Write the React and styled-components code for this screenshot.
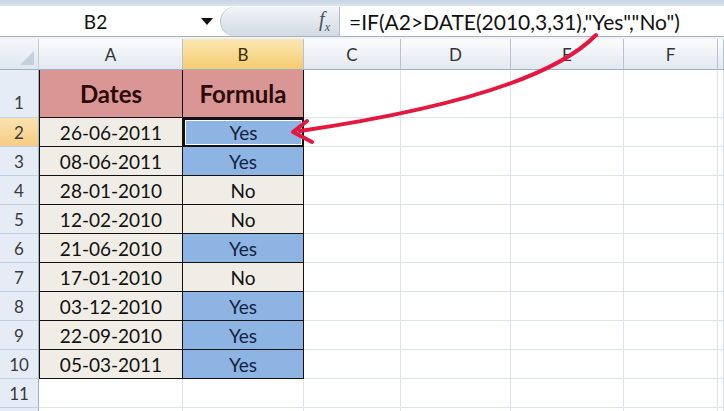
import React from "react";
import styled, { createGlobalStyle } from "styled-components";

const GlobalStyle = createGlobalStyle`
  html, body {
    margin: 0;
    padding: 0;
    background: #fff;
  }
  body {
    font-family: Lato, "Liberation Sans", sans-serif;
    overflow: hidden;
  }
`;

const rows = [
  ["26-06-2011", "Yes"],
  ["08-06-2011", "Yes"],
  ["28-01-2010", "No"],
  ["12-02-2010", "No"],
  ["21-06-2010", "Yes"],
  ["17-01-2010", "No"],
  ["03-12-2010", "Yes"],
  ["22-09-2010", "Yes"],
  ["05-03-2011", "Yes"],
];

const columns = ["A", "B", "C", "D", "E", "F", ""];

const App = () => {
  return (
    <Frame>
      <GlobalStyle />
      <TopBand />
      <FormulaBar>
        <NameBox>
          <NameText>B2</NameText>
          <DropArrow />
        </NameBox>
        <FxButton>
          <FxText>
            f<sub>x</sub>
          </FxText>
        </FxButton>
        <FormulaText>=IF(A2&gt;DATE(2010,3,31),"Yes","No")</FormulaText>
      </FormulaBar>
      <BarGap />
      <Sheet>
        <Corner>
          <CornerTriangle />
        </Corner>
        {columns.map((c) => (
          <ColHeader key={c || "g"} $active={c === "B"}>
            {c}
          </ColHeader>
        ))}

        <RowHeader $tall>1</RowHeader>
        <Cell $kind="head" $table $left>
          Dates
        </Cell>
        <Cell $kind="head" $table>
          Formula
        </Cell>
        {[0, 1, 2, 3, 4].map((i) => (
          <Cell key={i} />
        ))}

        {rows.map(([date, result], i) => (
          <React.Fragment key={date}>
            <RowHeader $active={i === 0}>{i + 2}</RowHeader>
            <Cell $kind="date" $table $left>
              {date}
            </Cell>
            <Cell $kind={result === "Yes" ? "yes" : "no"} $table $selected={i === 0}>
              {result}
            </Cell>
            {[0, 1, 2, 3, 4].map((k) => (
              <Cell key={k} />
            ))}
          </React.Fragment>
        ))}

        {["11", ""].map((n) => (
          <React.Fragment key={n || "last"}>
            <RowHeader>{n}</RowHeader>
            {[0, 1, 2, 3, 4, 5, 6].map((k) => (
              <Cell key={k} />
            ))}
          </React.Fragment>
        ))}
      </Sheet>

      <ArrowLayer viewBox="0 0 724 411" width="724" height="411">
        <path
          d="M 596 35 C 560 72, 470 106, 300 131"
          fill="none"
          stroke="#E5173F"
          strokeWidth="4"
          strokeLinecap="round"
        />
        <path
          d="M 307 121 L 293 132 L 312 142"
          fill="none"
          stroke="#E5173F"
          strokeWidth="4"
          strokeLinecap="round"
          strokeLinejoin="round"
        />
      </ArrowLayer>
    </Frame>
  );
};

export default App;

const Frame = styled.div`
  position: relative;
  width: 724px;
  height: 411px;
  overflow: hidden;
  background: #fff;
`;

const TopBand = styled.div`
  height: 6px;
  background: linear-gradient(#c6d4e6, #dbe4ef);
`;

const FormulaBar = styled.div`
  display: flex;
  align-items: stretch;
  height: 30px;
  background: #fff;
  border-bottom: 1px solid #a9b3c0;
`;

const NameBox = styled.div`
  width: 220px;
  display: flex;
  align-items: center;
`;

const NameText = styled.span`
  flex: 1;
  text-align: center;
  padding-right: 10px;
  font-size: 19px;
  color: #111;
`;

const DropArrow = styled.span`
  width: 0;
  height: 0;
  margin-right: 7px;
  border-left: 6px solid transparent;
  border-right: 6px solid transparent;
  border-top: 7px solid #111;
`;

const FxButton = styled.div`
  width: 120px;
  margin-top: 1px;
  border-radius: 16px 0 0 16px;
  background: linear-gradient(#f1f4f8, #d3dae4);
  border-left: 1px solid #b8c1cc;
  border-right: 1px solid #b5bcc6;
  display: flex;
  align-items: center;
  justify-content: flex-end;
  padding-right: 9px;
  box-sizing: border-box;
`;

const FxText = styled.span`
  font-family: "Liberation Serif", serif;
  font-style: italic;
  font-size: 20px;
  color: #4a525e;
  sub {
    font-size: 12px;
  }
`;

const FormulaText = styled.div`
  padding-left: 9px;
  display: flex;
  align-items: center;
  font-size: 21px;
  color: #111;
  white-space: nowrap;
`;

const BarGap = styled.div`
  height: 2px;
  background: #eef1f5;
`;

const Sheet = styled.div`
  display: grid;
  grid-template-columns: 39px 144px 121px 97px 110px 113px 94px 1fr;
  grid-template-rows: 31px 48px repeat(11, 29px);
`;

const Corner = styled.div`
  position: relative;
  background: linear-gradient(#f4f7fb, #dfe6ef);
  border-right: 1px solid #c5cdd8;
  border-bottom: 1px solid #9eb0c6;
  box-sizing: border-box;
`;

const CornerTriangle = styled.div`
  position: absolute;
  right: 4px;
  bottom: 4px;
  width: 0;
  height: 0;
  border-left: 14px solid transparent;
  border-bottom: 14px solid #c3cfdd;
`;

const ColHeader = styled.div`
  display: flex;
  align-items: center;
  justify-content: center;
  font-size: 17px;
  color: ${(p) => (p.$active ? "#3a2a00" : "#333")};
  background: ${(p) =>
    p.$active
      ? "linear-gradient(#fbe7b5, #f5cc6e)"
      : "linear-gradient(#fbfcfd, #e2e8f0)"};
  border-right: 1px solid #b8c2cf;
  border-bottom: 1px solid #9eb0c6;
  box-sizing: border-box;
`;

const RowHeader = styled.div`
  display: flex;
  align-items: ${(p) => (p.$tall ? "flex-end" : "center")};
  justify-content: center;
  padding-bottom: ${(p) => (p.$tall ? "4px" : "0")};
  font-size: 17px;
  color: #3a3a3a;
  background: ${(p) =>
    p.$active ? "linear-gradient(#fbe2b0, #f6cd84)" : "#e6ecf5"};
  border-right: 1px solid #9eb0c6;
  border-bottom: 1px solid #c5d0de;
  box-sizing: border-box;
`;

const cellBg = {
  head: "#d99694",
  date: "#efede6",
  yes: "#8db4e2",
  no: "#efede6",
};

const Cell = styled.div`
  position: relative;
  display: flex;
  align-items: center;
  justify-content: center;
  box-sizing: border-box;
  background: ${(p) => (p.$kind ? cellBg[p.$kind] : "#fff")};
  border-right: 1px solid ${(p) => (p.$table ? "#111" : "#dde3ea")};
  border-bottom: 1px solid ${(p) => (p.$table ? "#111" : "#dde3ea")};
  border-left: ${(p) => (p.$left ? "1px solid #111" : "none")};
  font-size: ${(p) => (p.$kind === "head" ? "24px" : "19px")};
  font-weight: ${(p) => (p.$kind === "head" ? 700 : 400)};
  color: ${(p) =>
    p.$kind === "head" ? "#2a0a0a" : p.$kind === "yes" ? "#13233f" : "#111"};
  ${(p) =>
    p.$selected &&
    `
    border: 2px solid #111;
    box-shadow: inset 0 0 0 1px #fff;
  `}
`;

const ArrowLayer = styled.svg`
  position: absolute;
  top: 0;
  left: 0;
  pointer-events: none;
`;
